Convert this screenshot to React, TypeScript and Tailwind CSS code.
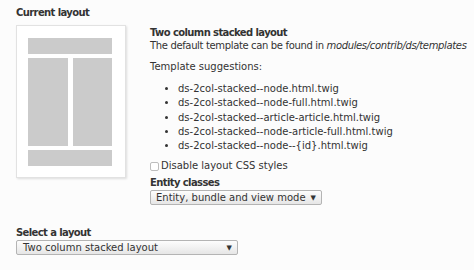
export default function App() {
  const suggestions = [
    'ds-2col-stacked--node.html.twig',
    'ds-2col-stacked--node-full.html.twig',
    'ds-2col-stacked--article-article.html.twig',
    'ds-2col-stacked--node-article-full.html.twig',
    'ds-2col-stacked--node--{id}.html.twig',
  ];

  const label = 'font-bold tracking-[-0.6px]';
  const select =
    'h-[15px] border border-[#b4b4b4] rounded-[2px] bg-gradient-to-b from-[#fdfdfd] to-[#e6e6e6] flex items-center justify-between';

  return (
    <div className="w-[474px] h-[270px] overflow-hidden bg-[#fcfcfc] text-[#333] text-[10px] leading-[14px] font-['DejaVu_Sans',sans-serif]">
      <div className="pl-4 pt-[6px]">
        <div className={label + ' h-[15px]'}>Current layout</div>

        <div className="flex mt-[4px]">
          {/* layout preview */}
          <div className="w-[110px] h-[153px] shrink-0 bg-white border border-[#e2e2e2] shadow-[1px_1px_2px_rgba(0,0,0,0.12)] pl-[11px] pr-[13px] pt-[12px] pb-[11px] flex flex-col gap-[4px]">
            <div className="h-[16px] bg-[#cbcbcb]" />
            <div className="flex-1 flex gap-[5px]">
              <div className="flex-1 bg-[#cbcbcb]" />
              <div className="flex-1 bg-[#cbcbcb]" />
            </div>
            <div className="h-[16px] bg-[#cbcbcb]" />
          </div>

          {/* details */}
          <div className="ml-[24px] pt-[2px] whitespace-nowrap">
            <div className={label + ' leading-[12px]'}>Two column stacked layout</div>
            <div className="tracking-[-0.35px]">
              The default template can be found in <em>modules/contrib/ds/templates</em>
            </div>
            <div className="mt-[7px]">Template suggestions:</div>
            <ul className="mt-[8px] ml-[28px] list-disc">
              {suggestions.map((s) => (
                <li key={s} className="leading-[14.3px]">
                  {s}
                </li>
              ))}
            </ul>
            <label className="flex items-center gap-[2px] mt-[6px]">
              <span className="w-[9px] h-[9px] border border-[#bdbdbd] rounded-[2px] bg-white" />
              <span>Disable layout CSS styles</span>
            </label>
            <div className={label + ' mt-[3px]'}>Entity classes</div>
            <div className={select + ' w-[172px] pl-[5px] pr-[5px]'}>
              <span>Entity, bundle and view mode</span>
              <span className="text-[7px]">▼</span>
            </div>
          </div>
        </div>

        <div className={label + ' mt-[21px]'}>Select a layout</div>
        <div className={select + ' w-[222px] pl-[6px] pr-[5px]'}>
          <span>Two column stacked layout</span>
          <span className="text-[7px]">▼</span>
        </div>
      </div>
    </div>
  );
}
